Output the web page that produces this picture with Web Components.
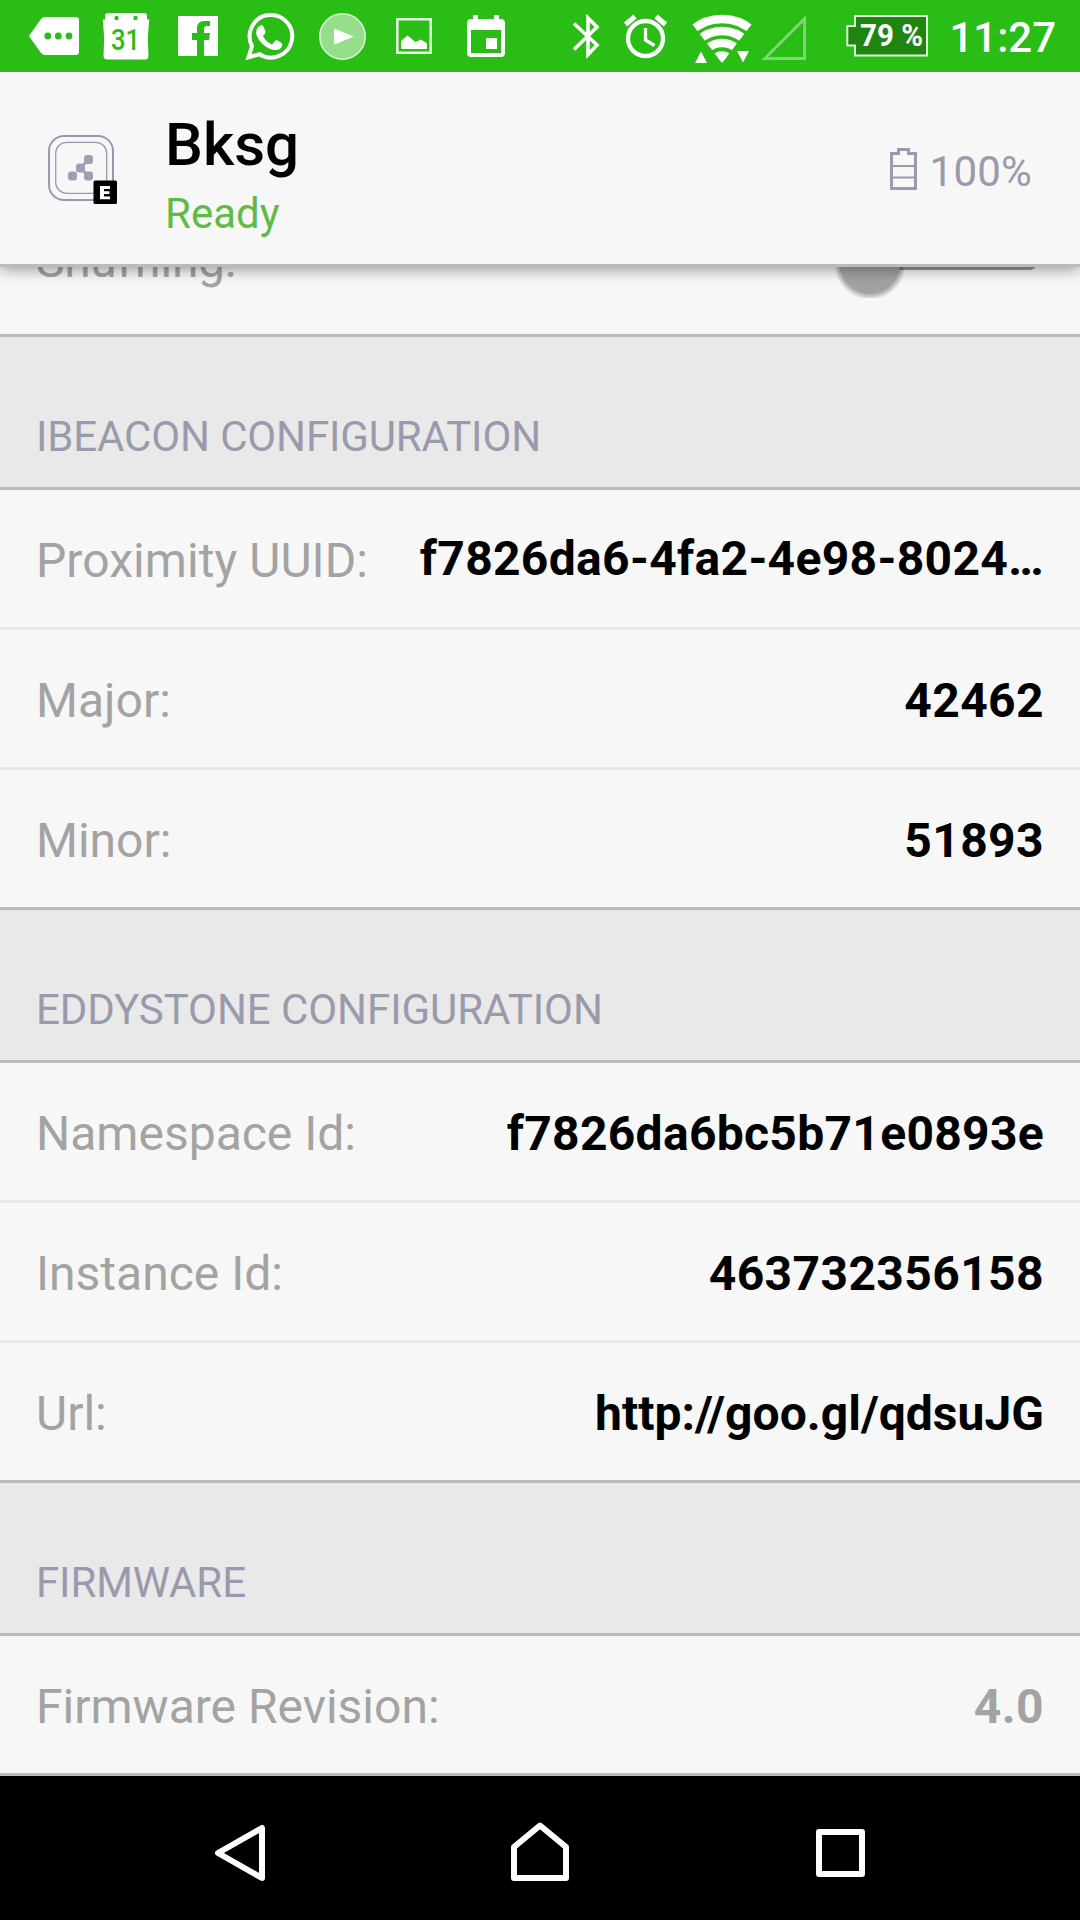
<!DOCTYPE html>
<html lang="en">
<head>
<meta charset="utf-8">
<title>Beacon configuration</title>
<style>
html,body{margin:0;padding:0}
body{width:1080px;height:1920px;overflow:hidden;font-family:Roboto,"Noto Sans",sans-serif;background:#f7f7f7}
</style>
</head>
<body>
<beacon-screen></beacon-screen>
<script>
const define = (name, html) => {
  const template = document.createElement('template');
  template.innerHTML = html;
  customElements.define(name, class extends HTMLElement {
    constructor() {
      super();
      this.attachShadow({mode: 'open'}).append(template.content.cloneNode(true));
    }
  });
};

define('status-bar', `
<style>
:host{display:flex;height:72px;background:#2abd15;color:#fff;justify-content:space-between;position:relative;z-index:3}
svg{display:block;flex:none}
.left,.right{display:flex;height:72px}
.day{font:500 29px Roboto,sans-serif;fill:#2abd15}
.pct{font:700 31px Roboto,sans-serif;fill:#fff}
.clock{width:126px;margin-left:-4px;padding:2px 24px 0 0;font-weight:500;font-size:42px;line-height:72px;box-sizing:border-box;white-space:nowrap;display:flex;justify-content:flex-end}
</style>
<div class="left">
<svg width="530" height="72" viewBox="0 0 530 72">
  <path fill="#fff" d="M29 36 41 19q1.500-2 4-2H76q3 0 3 3V52q0 3-3 3H45q-2.500 0-4-2Z"/>
  <g fill="#2abd15"><circle cx="47.800" cy="36" r="3.400"/><circle cx="58.300" cy="36" r="3.400"/><circle cx="69" cy="36" r="3.400"/></g>
  <path fill="#fff" d="M108 13h36q3 0 3 3v3.500h2.200q-1 13-1.400 19l.7 17q0 4-3 4H107q-3.500 0-3.500-4l.7-17q-.4-6-1.400-19H105V16q0-3 3-3Z"/>
  <circle cx="116.500" cy="18" r="2.200" fill="#2abd15"/><circle cx="135.500" cy="18" r="2.200" fill="#2abd15"/>
  <text class="day" x="111" y="50" textLength="29" lengthAdjust="spacingAndGlyphs">31</text>
  <path fill="#fff" d="M178 16h40v40H204V40h5l1-7h-6v-4q0-3 3-3h3v-5h-6q-7 0-7 8v4h-5v7h5v16H178Z"/>
  <path fill="none" stroke="#fff" stroke-width="4" d="M248.500 57.300 252 46A21.300 21.300 0 1 1 259.500 54.200Z"/>
  <path fill="#fff" d="M260 25.500q2.500-1 3.500 1l2 5q.5 1.500-2.500 4.500 3 6 9 8.500l3.500-4q.8-.8 2 0l4 2.500q1.500 1 .5 3.500-2 4-8 3.500-6-.8-12-6.500-7.500-8-5.500-13.500 1-3.500 3.500-4.500Z"/>
  <circle cx="342.500" cy="36.500" r="22.700" fill="#95de8a" stroke="#d9f4d5" stroke-width="1.600"/><path fill="#fff" d="M334 28.500 354 36.500 334 44.700Z"/>
  <path fill="none" stroke="#e4f7e1" stroke-width="2.600" d="M397.300 19.300h33.400v33.400h-33.400Z"/>
  <path fill="#fff" d="M401 41l6.500-5.500 8 6.500 5.500-2.500 6 4v5.500H401Z"/>
  <path fill="#fff" fill-rule="evenodd" d="M473 15h5v4h16v-4h5v4h2q4 0 4 4v30q0 4-4 4H471q-4 0-4-4V23q0-4 4-4h2ZM471 30v23h30V30ZM486 38h11v11H486Z"/>
</svg></div>
<div class="right">
<svg width="408" height="72" viewBox="550 0 408 72">
  <path fill="none" stroke="#fff" stroke-width="3.600" d="M574 23.500 597 45 588 54.500V18L597 27 574 49.500"/>
  <circle cx="645.500" cy="38.500" r="17.500" fill="none" stroke="#fff" stroke-width="4.300"/>
  <path fill="none" stroke="#fff" stroke-width="3.300" d="M645.500 28v12l9 5.500"/>
  <path fill="none" stroke="#fff" stroke-width="5" d="M625.500 24.500 635 16.500M665.500 24.500 656 16.500"/>
  <clipPath id="fan"><path d="M722 63 692.500 24.500 690 0H754L751.500 24.500Z"/></clipPath>
  <g clip-path="url(#fan)" fill="none" stroke="#fff" stroke-width="8.600"><circle cx="722" cy="65" r="46"/><circle cx="722" cy="65" r="34"/><circle cx="722" cy="65" r="22"/><circle cx="722" cy="65" r="9.500" fill="#fff"/></g>
  <path fill="#fff" d="M695 63 701 51.500 707 63ZM737 51H749L743 62.500Z"/>
  <path fill="none" stroke="#7fd773" stroke-width="2.800" d="M764.700 58.500H804.600V18.700Z"/>
  <path fill="#208410" stroke="#e2f5df" stroke-width="2" d="M855 16H927V55.500H855V45.500H847.300V26H855Z"/>
  <text class="pct" x="860" y="46" textLength="63" lengthAdjust="spacingAndGlyphs">79 %</text>
</svg>
<div class="clock">11:27</div>
</div>`);

define('beacon-header', `
<style>
:host{display:flex;align-items:flex-start;height:195px;box-sizing:border-box;background:#f7f7f7;border-bottom:3px solid #bbb;position:relative;z-index:2;box-shadow:0 2px 14px rgba(0,0,0,.42)}
svg{display:block;flex:none}
.icon{padding:59px 0 0 44px;width:165px;box-sizing:border-box}
.names{flex:1}
.name{font-size:60px;font-weight:500;line-height:70px;margin-top:38px;color:#000}
.state{font-size:42px;line-height:50px;margin-top:9px;color:#5fbb46}
.battery{display:flex;gap:13px;margin:75px 48px 0 0;color:#9a9aad;font-size:42px;line-height:50px;letter-spacing:.2px}
</style>
<div class="icon"><svg width="77" height="77" viewBox="44 131 77 77">
  <rect x="49" y="136" width="64" height="64" rx="15" fill="none" stroke="#9a9aad" stroke-width="2"/>
  <rect x="55.700" y="142.300" width="51" height="51" rx="11" fill="none" stroke="#9a9aad" stroke-width="1.300"/>
  <path d="M88.500 159.500 80.500 168 88.500 176" fill="none" stroke="#a4a4b5" stroke-width="3"/>
  <g fill="#a0a0b2"><rect x="84" y="155" width="9" height="9" rx="3"/><rect x="76" y="163.500" width="9" height="9" rx="3"/><rect x="68" y="171.500" width="9" height="9" rx="3"/><rect x="84" y="171.500" width="9" height="9" rx="3"/></g>
  <rect x="93.500" y="180.500" width="23.500" height="23.500" rx="1.500"/>
  <path fill="#fff" d="M100 186h10v3h-6v2.300h5.500v2.800H104v2.300h6v2.900H100Z"/>
</svg></div>
<div class="names"><div class="name"><slot name="name"></slot></div><div class="state"><slot name="state"></slot></div></div>
<div class="battery"><svg width="27" height="44" viewBox="0 -1 27 44"><path fill="none" stroke="#9a9aad" stroke-width="3" d="M1.500 5.500H8.500V1.500H18.500V5.500H25.500V40.500H1.500Z"/><path stroke="#9a9aad" stroke-width="2" d="M2 18H25M2 29.500H25"/></svg><slot name="battery"></slot></div>`);

define('section-title', `
<style>
:host{display:block;height:153px;box-sizing:border-box;padding:75px 36px 0;background:#e9e9e9;border-bottom:3px solid #bbb;color:#9a9aad;font-size:42px;line-height:50px;letter-spacing:var(--track,-.1px);text-transform:uppercase}
</style><slot></slot>`);

define('config-row', `
<style>
:host{display:flex;align-items:flex-start;justify-content:space-between;height:140px;box-sizing:border-box;padding:43px 36px 0;background:#f7f7f7;border-bottom:3px solid #e8e8e8;font-size:48px;line-height:56px;white-space:nowrap;color:#000}
:host([last]){border-bottom-color:#bbb}
:host([muted]){color:#a3a3a3}
.label{color:#a3a3a3}
.value{font-weight:700;letter-spacing:var(--track,.4px)}
:host([shift]) .value{margin-top:-2px}
:host([shift]) .label{letter-spacing:.07px}
:host([tall]) .label{margin-top:-7px;font-variant-ligatures:none;letter-spacing:-.32px}
</style><span class="label"><slot name="label"></slot></span><span class="value"><slot></slot></span>`);

define('toggle-switch', `
<style>:host{display:block;height:56px}svg{display:block;overflow:visible}</style>
<svg width="208" height="56" viewBox="0 0 208 56">
<defs><radialGradient id="s"><stop offset=".8" stop-color="#000" stop-opacity=".36"/><stop offset="1" stop-color="#000" stop-opacity="0"/></radialGradient><clipPath id="c"><rect x="-5" y="-20" width="80" height="78"/></clipPath></defs>
<rect x="30" y="0" width="170" height="30" rx="6" fill="#999"/>
<g clip-path="url(#c)"><circle cx="34" cy="24" r="36" fill="url(#s)"/></g><circle cx="34" cy="21.500" r="30.500" fill="#a2a2a2"/>
</svg>`);

define('nav-bar', `
<style>
:host{display:flex;height:144px;background:#000;justify-content:space-between;padding:43px 212px 0;box-sizing:border-box}
svg{display:block}
path{fill:none;stroke:#fff;stroke-width:6;stroke-linejoin:round}
</style>
<svg width="60" height="66" viewBox="212 1819 60 66"><path d="M262 1828V1878L218 1853Z"/></svg>
<svg width="66" height="66" viewBox="507 1819 66 66"><path d="M540 1825.500 566 1847V1878H514V1847Z"/></svg>
<svg width="60" height="66" viewBox="808 1819 60 66"><path d="M819 1832H862V1874H819Z"/></svg>`);

define('beacon-screen', `
<style>
:host{display:flex;flex-direction:column;width:1080px;height:1920px}
.list{flex:1;min-height:0;overflow:hidden;display:flex;flex-direction:column;justify-content:flex-end}
config-row,section-title{flex:none}
</style>
<status-bar></status-bar>
<beacon-header><span slot="name">Bksg</span><span slot="state">Ready</span><span slot="battery">100%</span></beacon-header>
<div class="list">
<config-row last tall><span slot="label">Shuffling:</span><toggle-switch></toggle-switch></config-row>
<section-title style="--track:-.14px">iBeacon configuration</section-title>
<config-row shift style="--track:.32px"><span slot="label">Proximity UUID:</span>f7826da6-4fa2-4e98-8024…</config-row>
<config-row><span slot="label">Major:</span>42462</config-row>
<config-row last><span slot="label">Minor:</span>51893</config-row>
<section-title style="--track:-.06px">Eddystone configuration</section-title>
<config-row style="--track:.3px"><span slot="label">Namespace Id:</span>f7826da6bc5b71e0893e</config-row>
<config-row><span slot="label">Instance Id:</span>463732356158</config-row>
<config-row last style="--track:.02px"><span slot="label">Url:</span>http://goo.gl/qdsuJG</config-row>
<section-title>Firmware</section-title>
<config-row last muted><span slot="label">Firmware Revision:</span>4.0</config-row>
</div>
<nav-bar></nav-bar>`);
</script>
</body>
</html>
